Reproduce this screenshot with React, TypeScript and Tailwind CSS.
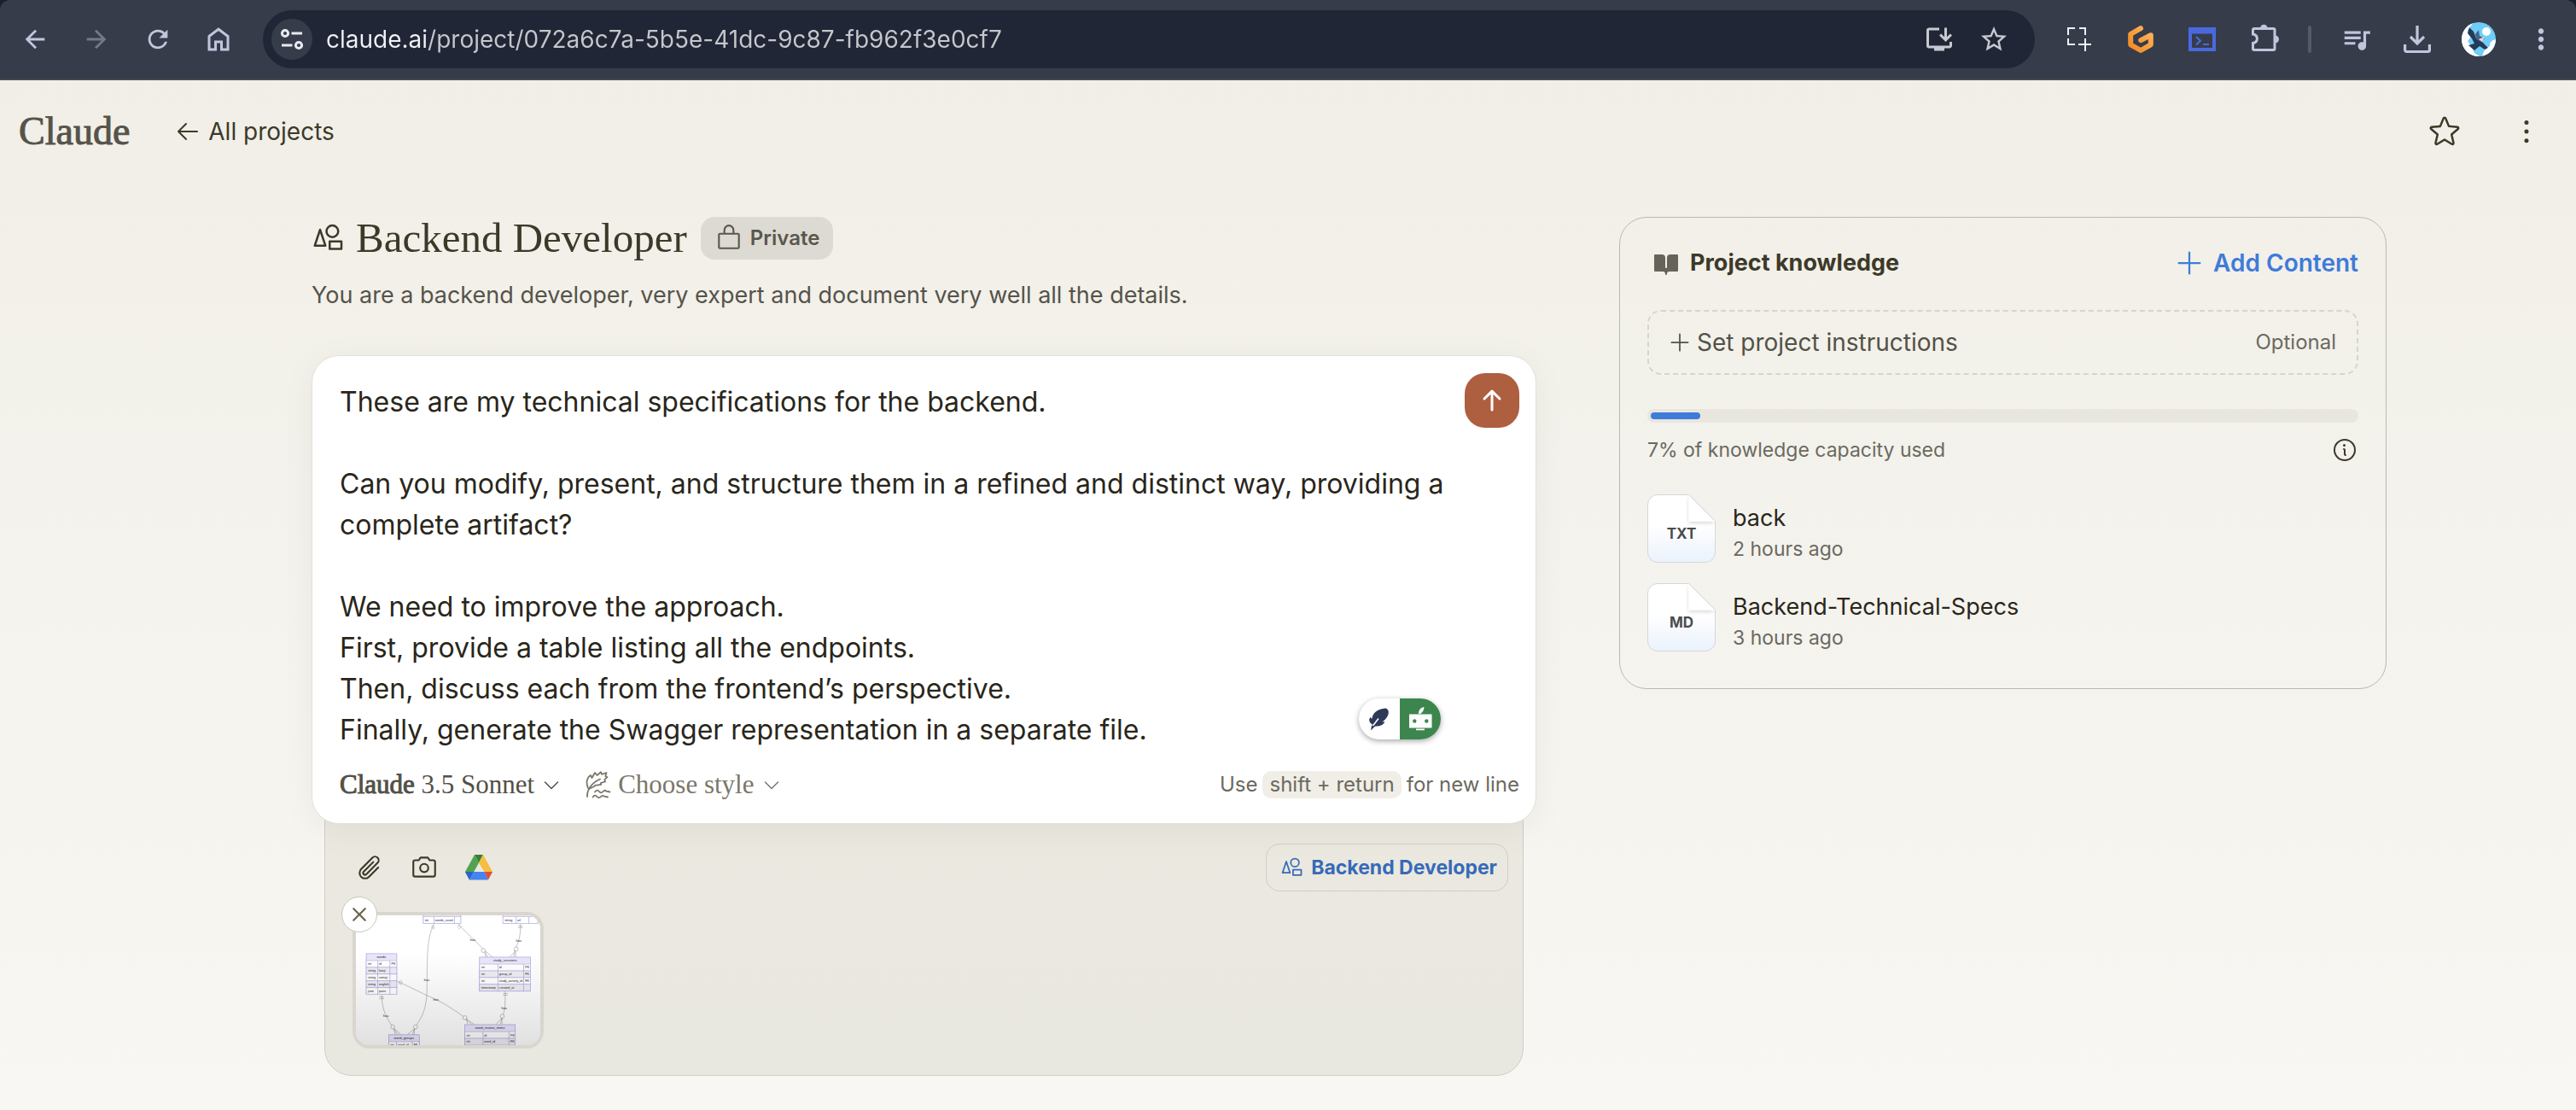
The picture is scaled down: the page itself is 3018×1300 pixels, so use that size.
import React from "react";
import {
  MdArrowBack,
  MdArrowForward,
  MdMoreVert,
  MdOutlineInstallDesktop,
  MdQueueMusic,
  MdRefresh,
  MdStarBorder,
} from "react-icons/md";
import {
  PiArrowLeft,
  PiArrowUpBold,
  PiBookOpenFill,
  PiCamera,
  PiCaretDown,
  PiDotsThreeVerticalBold,
  PiInfo,
  PiLockSimple,
  PiPaperclip,
  PiPlus,
  PiShapes,
  PiStar,
  PiXBold,
} from "react-icons/pi";

const PROMPT = `These are my technical specifications for the backend.

Can you modify, present, and structure them in a refined and distinct way, providing a complete artifact?

We need to improve the approach.
First, provide a table listing all the endpoints.
Then, discuss each from the frontend’s perspective.
Finally, generate the Swagger representation in a separate file.`;

function HomeIcon() {
  return (
    <svg width="26" height="28" viewBox="0 0 26 28" fill="none" stroke="currentColor" strokeWidth="3">
      <path d="M2 10.5 13 2.2l11 8.3V26h-7.5v-9h-7v9H2z" />
    </svg>
  );
}

function TuneIcon() {
  return (
    <svg width="28" height="26" viewBox="0 0 28 26" fill="none" stroke="#e8eaf0" strokeWidth="3">
      <circle cx="6" cy="6" r="3.6" />
      <path d="M13.5 6H26M2 20h12.500" />
      <circle cx="22" cy="20" r="3.6" />
    </svg>
  );
}

function SelectionIcon() {
  return (
    <svg width="28" height="28" viewBox="0 0 28 28" fill="none" stroke="#eef0f4" strokeWidth="2">
      <path d="M1 9V1h8M14 1h7v8M1 13v7h8M13 20h15M21 13v15" />
    </svg>
  );
}

function HexGIcon() {
  return (
    <svg width="30" height="32" viewBox="0 0 30 32" fill="none">
      <defs>
        <linearGradient id="hexg" x1="1" y1="0" x2="0" y2="1">
          <stop offset="0" stopColor="#ffb45b" />
          <stop offset="1" stopColor="#f08a24" />
        </linearGradient>
      </defs>
      <path
        d="M15 3.200 3.200 10v12.300L15 29l11.800-6.700V11.200l-11.600 6"
        stroke="url(#hexg)"
        strokeWidth="6"
        strokeLinecap="round"
        strokeLinejoin="round"
      />
    </svg>
  );
}

function ConsoleIcon() {
  return (
    <svg width="32" height="28" viewBox="0 0 32 28" fill="none">
      <path d="M0 0h32v28H0zM4 7.500v16.500h24V7.500z" fill="#4a69dd" fillRule="evenodd" />
      <path d="m9 11 4.800 4.800L9 20.500M17 20h7" stroke="#4a69dd" strokeWidth="2.200" />
    </svg>
  );
}

function PuzzleIcon() {
  return (
    <svg width="32" height="32" viewBox="0 0 32 32" fill="none">
      <path
        d="M1.500 7a1.500 1.500 0 0 1 1.500-1.500h22.500A1.500 1.500 0 0 1 27 7v22a1.500 1.500 0 0 1-1.500 1.500H3A1.500 1.500 0 0 1 1.500 29v-6.500c6.500-1.200 6.500-9.300 0-10.500z"
        stroke="currentColor"
        strokeWidth="3"
      />
      <path d="M10 5a4.300 4.300 0 0 1 8.600 0zM27.500 13.500a4.500 4.500 0 0 1 0 9z" fill="currentColor" />
    </svg>
  );
}

function DownloadIcon() {
  return (
    <svg width="32" height="32" viewBox="0 0 32 32" fill="none" stroke="currentColor" strokeWidth="3.200">
      <path d="M16 0v21M8 13l8 8 8-8M1.600 22v6.500a2 2 0 0 0 2 2h24.800a2 2 0 0 0 2-2V22" />
    </svg>
  );
}

function Avatar() {
  return (
    <svg width="40" height="40" viewBox="0 0 40 40">
      <defs>
        <clipPath id="face">
          <circle cx="20" cy="20" r="20" />
        </clipPath>
      </defs>
      <g clipPath="url(#face)">
        <path d="M0 0h40v40H0z" fill="#6fcdf8" />
        <path d="M0 8q8 0 9 6 3 4-2 8 4 5 8 14l6 4H0zM0 0h14L4 14z" fill="#fff" />
        <path d="M40 20q-8 2-7 8-7 3-9 12h16z" fill="#fff" />
        <circle cx="29" cy="11" r="5" fill="#fff" />
        <path d="m9 6 5 5 3 8 7 4 7 7-4 2-6-4-6 5-7-6 7-2-3-6-5-6z" fill="#253a57" />
        <path d="m16 14 4-5 1 7 6 3-4 4-6-3z" fill="#40648d" />
        <path d="m20 20 7-3-3 6z" fill="#f1d9cd" />
      </g>
    </svg>
  );
}

function QuillWaterIcon() {
  return (
    <svg
      width="30"
      height="32"
      viewBox="0 0 30 32"
      fill="none"
      stroke="currentColor"
      strokeWidth="1.800"
      strokeLinecap="round"
      strokeLinejoin="round"
    >
      <path d="M2 30C1.500 22 7 14 17 9.500" />
      <path d="M3 20C0 13 2 7 6 5l1.500 3L11 2l2.500 3L18 1.200l1 2.600 5.500-1.800-1.200 4 2.200 1.200-3.200 3 .8 2.200-5.300 1.600.4 1.800-7 1-1.500 1.500L4 21" />
      <path d="M11 24.500c2-2.500 3.500-2.500 5-.5 1.500 1.800 3 1.800 4.500 0 1.500-1.800 2.800-1.500 3.800-.3l4.200.8M8.500 30.500c2-2.300 3.500-2.300 5-.5 1.500 1.600 3 1.600 4.500 0 1.500-1.600 2.800-1.500 3.800-.3l4.200.8" />
    </svg>
  );
}

function FeatherIcon() {
  return (
    <svg width="24" height="27" viewBox="0 0 24 27">
      <path
        d="M2.500 26.500c-.5-3 .5-5.500 1.500-7C-.5 17-.5 13 1.500 11l2 2C3.500 6 11 1 19 .5c4 .5 4.500 5 3 8.500-1.500 3.200-4 6-6.500 7.200l3 .3c-2 4-6.500 5.500-11 5-2 1-3.500 3-5 5z"
        fill="#2d3a58"
      />
      <path d="M4.500 21 11 12.500" stroke="#fff" strokeWidth="1.600" />
    </svg>
  );
}

function RobotIcon() {
  return (
    <svg width="28" height="28" viewBox="0 0 28 28">
      <path d="M12 8c0-4 1.500-7 6.500-8-.5 4-1.500 6-4.500 8z" fill="#fff" />
      <path d="M1 8.500h26.500v16H1z" fill="#fff" />
      <path d="M9 25.500h10v1.800H9z" fill="#fff" />
      <circle cx="7.300" cy="16.500" r="2.200" fill="#3c864e" />
      <circle cx="21.300" cy="16.500" r="2.200" fill="#3c864e" />
    </svg>
  );
}

function DriveIcon() {
  return (
    <svg width="32" height="30" viewBox="0 0 32 30">
      <path d="M11 0 0 20l5 9.500 11-20z" fill="#51a351" />
      <path d="M11 0h10l-5 9.500z" fill="#37803a" />
      <path d="M21 0 16 9.500 22.500 20H32z" fill="#f6bd41" />
      <path d="M0 20h10L5 29.500z" fill="#2b63ce" />
      <path d="M10 20h12.500l4.500 9.500H5z" fill="#4584f1" />
      <path d="M22.500 20H32l-5 9.500z" fill="#d9503f" />
    </svg>
  );
}

type Entity = {
  x: number;
  y: number;
  w: number;
  title?: string;
  cols: [number, number];
  rows: [string, string, string][];
};

const ENTITIES: Entity[] = [
  { x: 319, y: 131, w: 130, cols: [37, 108], rows: [["int", "words_count", ""]] },
  { x: 595, y: 131, w: 121, cols: [46, 90], rows: [["string", "url", ""]] },
  {
    x: 121,
    y: 259,
    w: 106,
    title: "words",
    cols: [40, 82],
    rows: [
      ["int", "id", "PK"],
      ["string", "kanji", ""],
      ["string", "romaji", ""],
      ["string", "english", ""],
      ["json", "parts", ""],
    ],
  },
  {
    x: 514,
    y: 271,
    w: 177,
    title: "study_sessions",
    cols: [64, 153],
    rows: [
      ["int", "id", "PK"],
      ["int", "group_id", "FK"],
      ["int", "study_activity_id", "FK"],
      ["timestamp", "created_at", ""],
    ],
  },
  {
    x: 463,
    y: 505,
    w: 175,
    title: "word_review_items",
    cols: [63, 153],
    rows: [
      ["int", "id", "PK"],
      ["int", "word_id", "FK"],
    ],
  },
  { x: 199, y: 540, w: 106, title: "word_groups", cols: [27, 82], rows: [["int", "word_id", "FK"]] },
];

function EntityTable({ e }: { e: Entity }) {
  const head = e.title ? 24 : 0;
  const h = head + e.rows.length * 23.500;
  return (
    <g fontFamily="Liberation Sans, sans-serif" fontSize="11" fill="#222">
      <rect x={e.x} y={e.title ? e.y : e.y - 8} width={e.w} height={e.title ? h : h + 8} fill="#e9e6fb" stroke="#a79fe0" strokeWidth="2" />
      {e.title && (
        <text x={e.x + e.w / 2} y={e.y + 16} textAnchor="middle" fontSize="12">
          {e.title}
        </text>
      )}
      {e.rows.map((r, i) => {
        const y = e.y + head + i * 23.500;
        return (
          <g key={i}>
            <rect x={e.x} y={y} width={e.w} height="23.500" fill={i % 2 ? "#eeedf3" : "#fff"} stroke="#a79fe0" strokeWidth="1.500" />
            <path d={`M${e.x + e.cols[0]} ${y}v23.500M${e.x + e.cols[1]} ${y}v23.500`} stroke="#a79fe0" strokeWidth="2" />
            <text x={e.x + 6} y={y + 16}>{r[0]}</text>
            <text x={e.x + e.cols[0] + 4} y={y + 16}>{r[1]}</text>
            <text x={e.x + e.cols[1] + 5} y={y + 16}>{r[2]}</text>
          </g>
        );
      })}
    </g>
  );
}

function DiagramThumb() {
  return (
    <svg className="block h-full w-full" viewBox="84 126 642 450" preserveAspectRatio="xMidYMid slice" role="img" aria-label="Database diagram">
      <defs>
        <linearGradient id="shade" x1="0" y1="0" x2="0" y2="1">
          <stop offset="0.300" stopColor="#000" stopOpacity="0" />
          <stop offset="1" stopColor="#000" stopOpacity="0.120" />
        </linearGradient>
      </defs>
      <path d="M84 126h642v450H84z" fill="#fff" />
      <g fill="none" stroke="#8a8a8a" strokeWidth="1.500">
        <path d="M357 155c-22 40-25 90-25 195 0 60 0 110-40 160M438 155l97 96M656 155c0 50-5 60-22 95" />
        <path d="M175 402c0 50 15 80 42 116M228 354l100 48q70 28 145 86M603 389c0 50 0 70-14 98" />
        <path d="m348 160 12 8m-14-2 12 8M437 169l9-12m-4 18 9-12M648 163h16M648 169h16M166 409h17M166 415h17M234 365l6-15m0 18 6-15M595 397h17M595 403h17" />
        <path d="m530 254 14 17m-9-20 24 20m-24-20 0 20M640 249l-22 22m20-22-6 22m6-22 2 22" />
        <path d="m216 518 6 22m-6-22 24 20m-24-20 14 21M290 518l-25 20m24-20-8 22m8-22-2 22M468 486l5 18m-5-18 28 18m-28-18 18 18M592 482l-21 22m21-22-6 22m6-22 0 22" />
      </g>
      <g fill="#fff" stroke="#8a8a8a" strokeWidth="1.500">
        <circle cx="527" cy="248" r="7" />
        <circle cx="641" cy="243" r="7" />
        <circle cx="213" cy="513" r="7" />
        <circle cx="292" cy="513" r="7" />
        <circle cx="463" cy="481" r="7" />
        <circle cx="593" cy="476" r="7" />
      </g>
      <g fontFamily="Liberation Sans, sans-serif" fontSize="12" fill="#222" textAnchor="middle">
        <text x="491" y="215">has</text>
        <text x="650" y="217">has</text>
        <text x="331" y="354">has</text>
        <text x="363" y="423">has</text>
        <text x="190" y="477">has</text>
        <text x="600" y="452">has</text>
      </g>
      {ENTITIES.map((e) => (
        <EntityTable key={`${e.x}-${e.y}`} e={e} />
      ))}
      <path d="M84 126h642v450H84z" fill="url(#shade)" />
    </svg>
  );
}

function FileIcon({ kind }: { kind: string }) {
  return (
    <svg className="shrink-0" width="80" height="80" viewBox="0 0 80 80">
      <defs>
        <linearGradient id={`paper-${kind}`} x1="0" y1="0" x2="0" y2="1">
          <stop offset="0.450" stopColor="#fff" />
          <stop offset="1" stopColor="#eaf2fc" />
        </linearGradient>
        <filter id={`fold-${kind}`} x="-30%" y="-30%" width="160%" height="170%">
          <feDropShadow dx="0" dy="2" stdDeviation="2" floodOpacity="0.160" />
        </filter>
      </defs>
      <path
        d="M12 .5h36.500l31 31V68a11.500 11.500 0 0 1-11.500 11.500H12A11.500 11.500 0 0 1 .5 68V12A11.500 11.500 0 0 1 12 .5z"
        fill={`url(#paper-${kind})`}
        stroke="#d5d7da"
      />
      <path d="M48.500 1v30.500H79z" fill="#fff" filter={`url(#fold-${kind})`} />
      <text x="40" y="52" textAnchor="middle" fontFamily="Inter, sans-serif" fontWeight="700" fontSize="17" fill="#4b4b4b">
        {kind}
      </text>
    </svg>
  );
}

function BrowserBar() {
  return (
    <div className="bg-[#1a2030]">
      <header className="flex h-[94px] items-center rounded-t-[12px] border-b-2 border-[#46484d] bg-[#373c4b] pr-[22px] text-[#c1c6dc]">
        <nav aria-label="Browser navigation" className="flex items-center pl-6">
          <button aria-label="Back" className="flex w-[72px]">
            <MdArrowBack size={34} />
          </button>
          <button aria-label="Forward" className="flex w-[72px] text-[#747988]">
            <MdArrowForward size={34} />
          </button>
          <button aria-label="Reload" className="flex w-[75px]">
            <MdRefresh size={34} />
          </button>
          <button aria-label="Home" className="flex w-[65px]">
            <HomeIcon />
          </button>
        </nav>
        <div className="flex h-[68px] flex-1 items-center rounded-full bg-[#202636] pr-[30px] pl-[10px]">
          <button aria-label="Site information" className="flex size-12 shrink-0 items-center justify-center rounded-full bg-[#373c4b]">
            <TuneIcon />
          </button>
          <input
            aria-label="Address"
            type="text"
            defaultValue="claude.ai/project/072a6c7a-5b5e-41dc-9c87-fb962f3e0cf7"
            className="ml-4 min-w-0 flex-1 bg-[linear-gradient(90deg,#f1f2f5_118px,#c6c7cb_118px)] bg-clip-text font-['Inter'] text-[28px] leading-[36px] text-transparent outline-none"
          />
          <div className="flex items-center gap-7 text-[#c7c9cf]">
            <button aria-label="Install app">
              <MdOutlineInstallDesktop size={36} />
            </button>
            <button aria-label="Bookmark this page">
              <MdStarBorder size={36} />
            </button>
          </div>
        </div>
        <div className="flex items-center pl-[38px]">
          <button aria-label="Capture region" className="w-[71px]"><SelectionIcon /></button>
          <button aria-label="Gitpod" className="w-[71px]"><HexGIcon /></button>
          <button aria-label="Console" className="w-[74px]"><ConsoleIcon /></button>
          <button aria-label="Extensions" className="w-[66px] pb-1"><PuzzleIcon /></button>
          <span className="h-8 w-1 rounded-full bg-[#555a69]" />
          <button aria-label="Media controls" className="ml-[34px] w-[74px]"><MdQueueMusic size={38} /></button>
          <button aria-label="Downloads" className="w-[68px]"><DownloadIcon /></button>
          <button aria-label="Profile" className="w-[74px]"><Avatar /></button>
          <button aria-label="Browser menu"><MdMoreVert size={38} /></button>
        </div>
      </header>
    </div>
  );
}

function TopBar() {
  return (
    <div className="flex h-[120px] items-center pr-[38px] pl-[22px] text-[#3d3929]">
      <a href="#home" className="font-['Liberation_Serif'] text-[46px] leading-[48px] text-[#56534a] [-webkit-text-stroke:1px_#56534a]">
        Claude
      </a>
      <a href="#projects" className="ml-[52px] flex items-center gap-2 text-[28px] leading-[36px]">
        <PiArrowLeft size={32} />
        All projects
      </a>
      <div className="ml-auto flex items-center gap-[56px]">
        <button aria-label="Favourite project"><PiStar size={40} /></button>
        <button aria-label="Project menu"><PiDotsThreeVerticalBold size={40} /></button>
      </div>
    </div>
  );
}

function ProjectHeading() {
  return (
    <div>
      <div className="flex h-[50px] items-center">
        <PiShapes size={40} className="shrink-0 text-[#3d3929]" />
        <h1 className="ml-3 font-['Liberation_Serif'] text-[49px] leading-[48px] text-[#3d3929]">Backend Developer</h1>
        <span className="ml-4 flex h-[50px] items-center gap-2 rounded-2xl bg-[#dddad3] px-4 text-[24px] font-semibold text-[#5a574e]">
          <PiLockSimple size={34} />
          Private
        </span>
      </div>
      <p className="mt-6 text-[27px] leading-[36px] text-[#56534a]">
        You are a backend developer, very expert and document very well all the details.
      </p>
    </div>
  );
}

function Composer() {
  return (
    <form className="mt-[52px]" onSubmit={(e) => e.preventDefault()}>
      <div className="relative z-10 rounded-[32px] border border-[#e2e0da] bg-white pt-[30px] pr-[19px] pb-[25px] pl-[32px] shadow-[0_8px_40px_rgba(0,0,0,0.05)]">
        <div className="flex items-start">
          <textarea
            aria-label="Message"
            rows={9}
            defaultValue={PROMPT}
            className="block min-w-0 flex-1 resize-none overflow-hidden bg-transparent text-[32px] leading-[48px] text-[#29261b] outline-none"
          />
          <button aria-label="Send message" className="-mt-[10px] flex size-16 items-center justify-center rounded-[24px] bg-[#ae5f3f] text-white">
            <PiArrowUpBold size={32} />
          </button>
        </div>
        <div className="mt-5 flex h-10 items-center font-['Liberation_Serif'] text-[31px] leading-[40px]">
          <button type="button" className="flex items-center gap-2 text-[#535047]">
            <span>
              <span className="[-webkit-text-stroke:1px_#535047]">Claude</span> 3.5 Sonnet
            </span>
            <PiCaretDown size={24} />
          </button>
          <button type="button" className="ml-7 flex items-center gap-2 text-[#7a776a]">
            <QuillWaterIcon />
            Choose style
            <PiCaretDown size={24} />
          </button>
          <p className="ml-auto flex items-center font-['Inter'] text-[24px] leading-8 text-[#6b6960]">
            Use
            <kbd className="mx-[6px] rounded-[10px] bg-[#f0eee6] px-2 font-['Inter']">shift + return</kbd>
            for new line
          </p>
        </div>
        <div className="absolute right-[111px] bottom-[98px] flex h-12 w-24 overflow-hidden rounded-full bg-white shadow-[0_2px_6px_rgba(0,0,0,0.35)]">
          <button type="button" aria-label="Writing suggestions" className="flex w-12 items-center justify-center">
            <FeatherIcon />
          </button>
          <button type="button" aria-label="Writing assistant" className="flex w-12 items-center justify-center bg-[#3c864e]">
            <RobotIcon />
          </button>
        </div>
      </div>
      <div className="mx-[15px] -mt-8 rounded-b-[32px] border border-[#cfcdc6] bg-linear-to-b from-[#ebe8e0] to-[#e9e8e0] px-[17px] pt-[54px] pb-[31px]">
        <div className="flex h-[56px] items-center text-[#3d3929]">
          <button type="button" aria-label="Attach file" className="ml-[18px]"><PiPaperclip size={34} /></button>
          <button type="button" aria-label="Take screenshot" className="ml-[30px]"><PiCamera size={34} /></button>
          <button type="button" aria-label="Add from Drive" className="ml-[31px]"><DriveIcon /></button>
          <button
            type="button"
            className="ml-auto flex h-[56px] items-center gap-2 rounded-2xl border border-[#d0cec6] pr-3 pl-4 text-[23px] font-bold text-[#366ab8]"
          >
            <PiShapes size={28} />
            Backend Developer
          </button>
        </div>
        <div className="relative mt-6 ml-[15px] w-[224px]">
          <div className="h-[160px] overflow-hidden rounded-[20px] border-4 border-[#d8d6ce]">
            <DiagramThumb />
          </div>
          <button
            type="button"
            aria-label="Remove attachment"
            className="absolute -top-[18px] -left-[13px] flex size-[42px] items-center justify-center rounded-full border border-[#c9c7bf] bg-white text-[#6b6651]"
          >
            <PiXBold size={24} />
          </button>
        </div>
      </div>
    </form>
  );
}

const FILES = [
  { kind: "TXT", name: "back", age: "2 hours ago" },
  { kind: "MD", name: "Backend-Technical-Specs", age: "3 hours ago" },
];

function KnowledgePanel() {
  return (
    <aside className="rounded-[32px] border border-[#b9b8b1] px-8 pt-[30px] pb-[43px]">
      <div className="flex h-[46px] items-center">
        <PiBookOpenFill size={32} className="ml-[6px] text-[#66635a]" />
        <h2 className="ml-3 text-[27px] leading-[36px] font-bold text-[#3d3929]">Project knowledge</h2>
        <button className="ml-auto flex items-center gap-[10px] text-[28px] leading-[36px] font-semibold text-[#3f7bd9]">
          <PiPlus size={36} />
          Add Content
        </button>
      </div>
      <button className="mt-8 flex h-[76px] w-full items-center rounded-2xl border-2 border-dashed border-[#d6d5cd] pr-6 pl-[22px] text-[#535146]">
        <PiPlus size={28} />
        <span className="ml-[6px] text-[28px] leading-[36px]">Set project instructions</span>
        <span className="ml-auto text-[24px] text-[#6b6960]">Optional</span>
      </button>
      <div
        role="progressbar"
        aria-label="Knowledge capacity"
        aria-valuenow={7}
        aria-valuemin={0}
        aria-valuemax={100}
        className="mt-10 rounded-full bg-[#e8e6de] p-1"
      >
        <div className="h-2 rounded-full bg-[#3f7bd9]" style={{ width: "7%" }} />
      </div>
      <div className="mt-4 flex h-8 items-center justify-between text-[23px] leading-8 text-[#6b6960]">
        7% of knowledge capacity used
        <button aria-label="About knowledge capacity" className="text-[#3d3929]">
          <PiInfo size={32} />
        </button>
      </div>
      <ul className="mt-9 flex flex-col gap-6">
        {FILES.map((f) => (
          <li key={f.name} className="flex gap-5">
            <FileIcon kind={f.kind} />
            <div className="pt-[10px]">
              <a href={`#${f.name}`} className="block text-[27px] leading-[36px] text-[#29261b]">
                {f.name}
              </a>
              <span className="block pt-[2px] text-[23px] leading-8 text-[#6b6960]">{f.age}</span>
            </div>
          </li>
        ))}
      </ul>
    </aside>
  );
}

export default function App() {
  return (
    <div className="flex min-h-screen flex-col bg-linear-to-b from-[#f0eee6] to-[#f8f7f3] font-['Inter',sans-serif]">
      <BrowserBar />
      <TopBar />
      <main className="grid grid-cols-[1435fr_899fr] items-start gap-x-[97px] pt-10 pr-[222px] pl-[365px]">
        <section>
          <ProjectHeading />
          <Composer />
        </section>
        <KnowledgePanel />
      </main>
    </div>
  );
}
